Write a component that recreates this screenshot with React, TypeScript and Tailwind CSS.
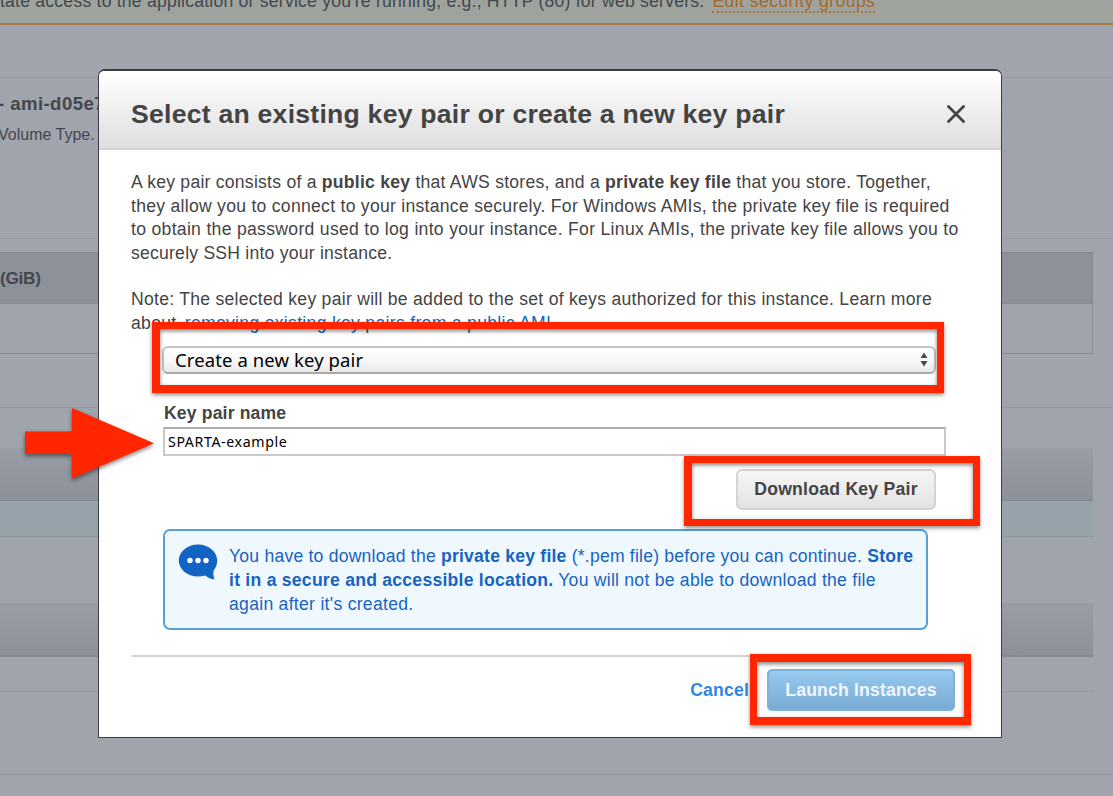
import type { ReactNode } from "react";

function Line({ children, className = "" }: { children: ReactNode; className?: string }) {
  return <span className={`block whitespace-nowrap ${className}`}>{children}</span>;
}

function PageBehind() {
  return (
    <div className="flex h-full flex-col bg-[#a0a4ac] text-[#43474e]">
      <div className="flex h-[25px] shrink-0 items-start overflow-hidden border-b-2 border-[#a27a49] bg-[#9ea39e]">
        <p className="-mt-[10px] h-[24px] whitespace-nowrap text-[17.6px] leading-[22px] tracking-[0.22px]">
          tate access to the application or service you're running, e.g., HTTP (80) for web servers.
          <a className="ml-[8px] inline-block h-[23px] border-b-2 border-dotted border-[#a87238] tracking-[0.42px] text-[#a4692a]">
            Edit security groups
          </a>
        </p>
      </div>
      <div className="h-[52px] shrink-0" />
      <div className="h-[162px] shrink-0 border-y border-[#969aa3] pt-[14px]">
        <p className="-ml-[2px] whitespace-nowrap text-[18.6px] leading-6 font-bold tracking-[0.42px]">- ami-d05e7</p>
        <p className="mt-[7px] -ml-[2px] whitespace-nowrap text-[16px] leading-6">Volume Type.</p>
      </div>
      <div className="mt-[13px] mr-5 h-[102px] shrink-0 border border-l-0 border-[#868a93]">
        <div className="flex h-[51px] items-center border-b border-[#868a93] bg-[#8d9199] pt-px text-[17.3px] font-bold tracking-[-0.3px]">
          (GiB)
        </div>
      </div>
      <div className="mt-[53px] h-px shrink-0 bg-[#959aa2]" />
      <div className="mt-[40px] mr-5 h-[53px] shrink-0 border-b border-[#858991] bg-linear-to-b from-[#999da5] to-[#8c9098]" />
      <div className="mr-5 h-[36px] shrink-0 border-b border-[#90959c] bg-[#97a2aa]" />
      <div className="mt-[66px] mr-5 h-[54px] shrink-0 border-b-2 border-[#858991] bg-linear-to-b from-[#999da5] to-[#8c9098]" />
      <div className="mt-[34px] mr-5 h-px shrink-0 bg-[#90949c]" />
      <div className="mt-[82px] h-px shrink-0 bg-[#93979f]" />
    </div>
  );
}

function Dialog() {
  return (
    <div className="absolute top-[69px] left-[98px] flex h-[669px] w-[904px] flex-col rounded-t-[7px] border border-t-2 border-[#3d3d40] bg-white text-[17.6px] text-[#444]">
      <header className="flex h-[79px] shrink-0 items-center justify-between rounded-t-[5px] border-b-2 border-b-[#d4d4d4] bg-linear-to-b from-white to-[#dfdfdf] pr-[36px] pl-8">
        <h1 className="mt-[11px] whitespace-nowrap text-[26.6px] font-bold tracking-[0.24px]">
          Select an existing key pair or create a new key pair
        </h1>
        <svg className="mt-[9px] size-[18px]" viewBox="0 0 18 18" stroke="#444" strokeWidth="2.8" strokeLinecap="round">
          <path d="M1.5 1.5 16.5 16.5M16.5 1.5 1.5 16.5" />
        </svg>
      </header>

      <div className="mt-[21px] ml-8 leading-[23.7px]">
        <Line className="tracking-[0.24px]">
          A key pair consists of a <b>public key</b> that AWS stores, and a <b>private key file</b> that you store. Together,
        </Line>
        <Line className="tracking-[0.27px]">
          they allow you to connect to your instance securely. For Windows AMIs, the private key file is required
        </Line>
        <Line className="tracking-[0.3px]">
          to obtain the password used to log into your instance. For Linux AMIs, the private key file allows you to
        </Line>
        <Line className="tracking-[0.22px]">securely SSH into your instance.</Line>
        <Line className="mt-[22.5px] tracking-[0.265px]">
          Note: The selected key pair will be added to the set of keys authorized for this instance. Learn more
        </Line>
        <Line className="tracking-[0.3px]">
          about <a className="ml-[3px] text-[#0f69c0]">removing existing key pairs from a public AMI</a>.
        </Line>
      </div>

      <div className="mt-[10px] ml-[63px] flex h-[28px] w-[774px] shrink-0 items-center justify-between rounded-[6px] border-2 border-[#c4c4c4] border-b-[#a8a8a8] bg-linear-to-b from-white via-[#f8f8f8] via-50% to-[#eaeaea] pr-[6px] pl-[11px]">
        <span className="whitespace-nowrap font-['Noto_Sans',sans-serif] text-[18.5px] leading-6 tracking-[0.1px] text-black">
          Create a new key pair
        </span>
        <svg className="h-[15px] w-[8px]" viewBox="0 0 8 15" fill="#4a4a4a">
          <path d="M4 0.5 7.5 6H0.5ZM4 14.5 7.5 9H0.5Z" />
        </svg>
      </div>

      <div className="ml-16 flex w-[783px] shrink-0 flex-col">
        <label className="mt-[27px] pl-px leading-[24px] font-bold tracking-[0.15px]">Key pair name</label>
        <div className="mt-[2px] flex h-[29px] items-center border-2 border-[#c9c9c9] border-t-[#aeaeae] pl-[3px] font-['Noto_Sans',sans-serif] text-[14.2px] tracking-[0.6px] text-black">
          SPARTA-example
        </div>
        <div className="mt-[13px] mr-[10px] flex h-[41px] w-[200px] items-center justify-center self-end rounded-[6px] border-2 border-[#d3d3d3] bg-linear-to-b from-[#f5f5f5] to-[#e3e3e3] font-bold tracking-[0.25px] whitespace-nowrap">
          Download Key Pair
        </div>
      </div>

      <div className="mt-[19px] ml-16 flex h-[101px] w-[765px] shrink-0 rounded-[7px] border-2 border-[#5a9fd6] bg-[#f0f8ff] text-[#1764bf]">
        <svg className="mt-[13px] ml-[13px] h-[36px] w-[40px] shrink-0" viewBox="0 0 40 36">
          <path
            fill="#1264c4"
            d="M20 .5C30.500 .5 39.200 7.500 39.200 16.500c0 4.300-1.500 7.500-3.700 10.200-.5 3 .1 5.700 1 8.800-3.400-.3-6.600-1.700-9.200-3.900-2.300.6-4.700.9-7.300.9C9.500 32.500 .8 25.500 .8 16.500S9.500 .5 20 .5Z"
          />
          <circle cx="12" cy="16.500" r="2.700" fill="#fff" />
          <circle cx="20" cy="16.500" r="2.700" fill="#fff" />
          <circle cx="28" cy="16.500" r="2.700" fill="#fff" />
        </svg>
        <div className="mt-[14.5px] ml-[11px] leading-[23.7px]">
          <Line className="tracking-[0.21px]">
            You have to download the <b>private key file</b> (*.pem file) before you can continue. <b>Store</b>
          </Line>
          <Line className="tracking-[0.245px]">
            <b>it in a secure and accessible location.</b> You will not be able to download the file
          </Line>
          <Line className="tracking-[0.28px]">again after it's created.</Line>
        </div>
      </div>

      <footer className="mt-[25px] mr-[30px] ml-8 flex shrink-0 items-start justify-end border-t-2 border-[#d3d3d3] pt-[12px] font-bold tracking-[0.18px]">
        <a className="leading-[42px] text-[#2f86e3]">Cancel</a>
        <div className="mr-[16px] ml-[18px] flex h-[42px] w-[188px] items-center justify-center rounded-[5px] border-2 border-[#7eb2d9] bg-linear-to-b from-[#98caf0] to-[#79abd3] pt-px whitespace-nowrap text-[#eef7ff]">
          Launch Instances
        </div>
      </footer>
    </div>
  );
}

function Highlight({ className }: { className: string }) {
  return (
    <div
      className={`absolute border-[7px] border-[#ff2600] shadow-[0_2px_4px_rgba(0,0,0,0.45),inset_0_2px_4px_rgba(0,0,0,0.5)] ${className}`}
    />
  );
}

export default function App() {
  return (
    <div className="relative h-[796px] w-[1113px] overflow-hidden font-['Liberation_Sans',Arial,sans-serif]">
      <PageBehind />
      <Dialog />
      <Highlight className="top-[322px] left-[152px] h-[71px] w-[792px] border-b-8 border-l-8" />
      <Highlight className="top-[456px] left-[684px] h-[70px] w-[296px] border-l-8" />
      <Highlight className="top-[654px] left-[750px] h-[71px] w-[221px] border-t-8 border-b-8" />
      <svg
        className="absolute top-[400px] left-[18px] h-[90px] w-[145px] drop-shadow-[0_2px_2px_rgba(0,0,0,0.5)]"
        viewBox="18 400 145 90"
      >
        <path fill="#ff2600" d="M25 431.500H72V408L154 443.200 72 478.500V454H25Z" />
      </svg>
    </div>
  );
}
